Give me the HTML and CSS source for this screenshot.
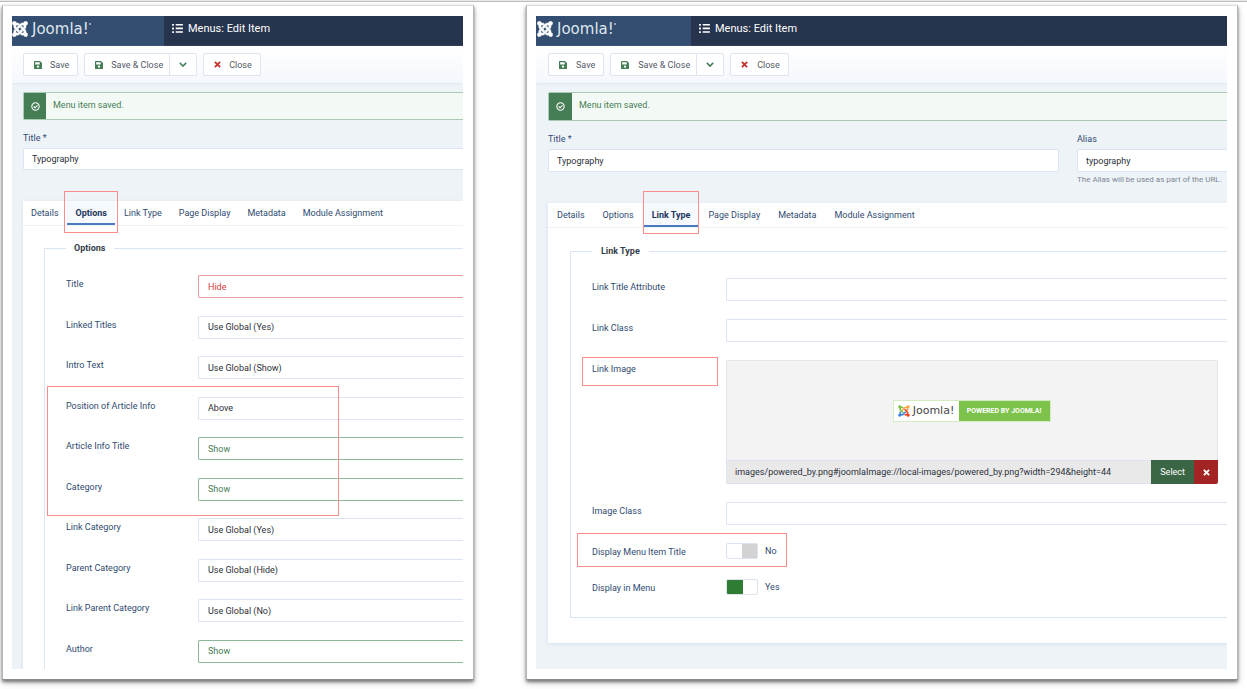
FILE: index.html
```html
<!DOCTYPE html>
<html lang="en">
<head>
<meta charset="utf-8">
<title>Menus: Edit Item</title>
<link rel="stylesheet" href="styles.css">
</head>
<body>
<svg width="0" height="0" class="sprite" aria-hidden="true">
  <symbol id="joomla" viewBox="-8 24 464 464">
    <path class="k1" d="M.6 92.1C.6 58.8 27.4 32 60.4 32c30 0 54.5 21.9 59.2 50.2 32.6-7.6 67.1.6 96.5 30l-44.3 44.3c-20.5-20.5-42.6-16.3-55.4-3.5-14.3 14.3-14.3 37.9 0 52.2l99.5 99.5-44 44.3c-87.7-87.2-49.7-49.7-99.8-99.7-26.8-26.5-35-64.8-24.8-98.9C20.4 144.6.6 120.7.6 92.1z"/>
    <path class="k2" d="M130.1 208.5l44.3 44.3c10-10 89.7-89.7 99.7-99.8 14.3-14.3 37.6-14.3 51.9 0 12.8 12.8 17 35-3.5 55.4l44 44.3c31.2-31.2 38.5-67.6 28.9-101.2 29.2-4.1 51.9-29.2 51.9-59.5 0-33.2-26.8-60.1-59.8-60.1-30.3 0-55.4 22.5-59.5 51.6-33.8-9.9-71.7-1.5-98.3 25.1-18.3 19.1-71.1 71.5-99.6 99.9z"/>
    <path class="k3" d="M396.4 360.7c8.2-32.7-.9-68.5-26.3-93.9-11.8-12.2 5 4.7-99.5-99.7l-44.3 44.3 99.7 99.7c14.3 14.3 14.3 37.6 0 51.9-12.8 12.8-35 17-55.4-3.5l-44 44.3c27.6 30.2 68 38.8 102.7 28 5.5 27.4 29.7 48.1 58.9 48.1 33 0 59.8-26.8 59.8-60.1 0-30.2-22.5-55-51.6-59.1z"/>
    <path class="k4" d="M312.1 307.6l-44-44.3c-87 86.4-50.4 50.4-99.7 99.8-14.3 14.3-37.6 14.3-51.9 0-13.1-13.4-16.9-35.3 3.2-55.4l-44-44.3c-30.2 30.2-38 65.2-29.5 98.3-26.7 6-46.2 29.9-46.2 58.2C0 453.2 26.8 480 59.8 480c28.6 0 52.5-19.8 58.6-46.7 32.7 8.2 68.5-.6 94.2-26 32.1-32 12.2-12.4 99.5-99.7z"/>
  </symbol>
  <symbol id="list" viewBox="0 0 12 10"><path d="M0 0h2v2H0zM0 4h2v2H0zM0 8h2v2H0zM4 0h8v1.7H4zM4 4h8v1.7H4zM4 8h8v1.7H4z"/></symbol>
  <symbol id="save" viewBox="0 0 448 448"><path fill-rule="evenodd" d="M434 98 350 14A48 48 0 0 0 316 0H48A48 48 0 0 0 0 48v352a48 48 0 0 0 48 48h352a48 48 0 0 0 48-48V132a48 48 0 0 0-14-34zM224 384a64 64 0 1 1 0-128 64 64 0 0 1 0 128zM320 180a12 12 0 0 1-12 12H76a12 12 0 0 1-12-12V76a12 12 0 0 1 12-12h232a12 12 0 0 1 12 12z"/></symbol>
  <symbol id="chevron" viewBox="0 0 10 6"><path d="M1 1l4 4 4-4" fill="none" stroke="currentColor" stroke-width="1.9"/></symbol>
  <symbol id="cross" viewBox="0 0 8 8"><path d="M1 1l6 6M7 1L1 7" fill="none" stroke="currentColor" stroke-width="2.1"/></symbol>
  <symbol id="check" viewBox="0 0 10 10"><path d="M5 .9a4.1 4.1 0 1 0 0 8.200a4.100 4.100 0 0 0 0-8.200zM3 5l1.500 1.500L7.200 3.700" fill="none" stroke="currentColor" stroke-width="1.200"/></symbol>
</svg>

<main class="shots">
  <section class="frame">
    <div class="panel">
      <header class="topbar">
        <a class="brand" href="#"><svg class="knot"><use href="#joomla"/></svg><span class="wordmark">Joomla!</span></a>
        <h1 class="page-title"><svg class="i-list"><use href="#list"/></svg>Menus: Edit Item</h1>
      </header>
      <div class="toolbar">
        <button class="btn"><svg class="i-save"><use href="#save"/></svg>Save</button>
        <div class="btn-group">
          <button class="btn"><svg class="i-save"><use href="#save"/></svg>Save &amp; Close</button>
          <button class="btn btn-drop" aria-label="More save options"><svg class="i-chevron"><use href="#chevron"/></svg></button>
        </div>
        <button class="btn"><svg class="i-cross"><use href="#cross"/></svg>Close</button>
      </div>
      <div class="content">
        <div class="alert"><span class="alert-icon"><svg class="i-check"><use href="#check"/></svg></span><span class="alert-text">Menu item saved.</span></div>
        <div class="title-area">
          <div class="stack"><label for="title-a">Title *</label><input class="control" id="title-a" type="text" value="Typography"></div>
        </div>
        <div class="card">
          <nav class="tabs">
            <a class="tab" href="#">Details</a>
            <a class="tab active" href="#">Options<span class="mark mark-tab"></span></a>
            <a class="tab" href="#">Link Type</a>
            <a class="tab" href="#">Page Display</a>
            <a class="tab" href="#">Metadata</a>
            <a class="tab" href="#">Module Assignment</a>
          </nav>
          <fieldset class="group">
            <legend>Options</legend>
            <div class="rows rows-fill">
              <div class="row"><label for="o1">Title</label><select class="control danger" id="o1"><option>Hide</option></select></div>
              <div class="row"><label for="o2">Linked Titles</label><select class="control" id="o2"><option>Use Global (Yes)</option></select></div>
              <div class="row"><label for="o3">Intro Text</label><select class="control" id="o3"><option>Use Global (Show)</option></select></div>
              <div class="row"><label for="o4">Position of Article Info</label><select class="control" id="o4"><option>Above</option></select></div>
              <div class="row"><label for="o5">Article Info Title</label><select class="control success" id="o5"><option>Show</option></select></div>
              <div class="row"><label for="o6">Category</label><select class="control success" id="o6"><option>Show</option></select></div>
              <div class="row"><label for="o7">Link Category</label><select class="control" id="o7"><option>Use Global (Yes)</option></select></div>
              <div class="row"><label for="o8">Parent Category</label><select class="control" id="o8"><option>Use Global (Hide)</option></select></div>
              <div class="row"><label for="o9">Link Parent Category</label><select class="control" id="o9"><option>Use Global (No)</option></select></div>
              <div class="row"><label for="o10">Author</label><select class="control success" id="o10"><option>Show</option></select></div>
              <span class="mark mark-rows"></span>
            </div>
          </fieldset>
        </div>
      </div>
    </div>
  </section>

  <section class="frame">
    <div class="panel wide">
      <header class="topbar">
        <a class="brand" href="#"><svg class="knot"><use href="#joomla"/></svg><span class="wordmark">Joomla!</span></a>
        <h1 class="page-title"><svg class="i-list"><use href="#list"/></svg>Menus: Edit Item</h1>
      </header>
      <div class="toolbar">
        <button class="btn"><svg class="i-save"><use href="#save"/></svg>Save</button>
        <div class="btn-group">
          <button class="btn"><svg class="i-save"><use href="#save"/></svg>Save &amp; Close</button>
          <button class="btn btn-drop" aria-label="More save options"><svg class="i-chevron"><use href="#chevron"/></svg></button>
        </div>
        <button class="btn"><svg class="i-cross"><use href="#cross"/></svg>Close</button>
      </div>
      <div class="content">
        <div class="alert"><span class="alert-icon"><svg class="i-check"><use href="#check"/></svg></span><span class="alert-text">Menu item saved.</span></div>
        <div class="title-area">
          <div class="stack"><label for="title-b">Title *</label><input class="control closed" id="title-b" type="text" value="Typography"></div>
          <div class="stack"><label for="alias">Alias</label><input class="control" id="alias" type="text" value="typography"><small class="hint">The Alias will be used as part of the URL.</small></div>
        </div>
        <div class="card">
          <nav class="tabs">
            <a class="tab" href="#">Details</a>
            <a class="tab" href="#">Options</a>
            <a class="tab active" href="#">Link Type<span class="mark mark-tab"></span></a>
            <a class="tab" href="#">Page Display</a>
            <a class="tab" href="#">Metadata</a>
            <a class="tab" href="#">Module Assignment</a>
          </nav>
          <fieldset class="group">
            <legend>Link Type</legend>
            <div class="rows">
              <div class="row"><label for="l1">Link Title Attribute</label><input class="control" id="l1" type="text"></div>
              <div class="row"><label for="l2">Link Class</label><input class="control" id="l2" type="text"></div>
              <div class="row"><label for="l3">Link Image</label>
                <div class="media">
                  <div class="preview">
                    <div class="badge"><span class="badge-logo"><svg class="knot color"><use href="#joomla"/></svg><span class="wordmark">Joomla!</span></span><span class="badge-text">POWERED BY JOOMLA!</span></div>
                  </div>
                  <div class="media-bar">
                    <input class="control path" id="l3" type="text" readonly value="images/powered_by.png#joomlaImage://local-images/powered_by.png?width=294&amp;height=44">
                    <button class="select-btn">Select</button>
                    <button class="clear-btn" aria-label="Clear"><svg class="i-cross"><use href="#cross"/></svg></button>
                  </div>
                </div>
                <span class="mark mark-label"></span>
              </div>
              <div class="row"><label for="l4">Image Class</label><input class="control" id="l4" type="text"></div>
              <div class="row"><label for="l5">Display Menu Item Title</label><span class="switch"><input class="toggle" id="l5" type="checkbox"><span>No</span></span><span class="mark mark-switch"></span></div>
              <div class="row"><label for="l6">Display in Menu</label><span class="switch"><input class="toggle" id="l6" type="checkbox" checked><span>Yes</span></span></div>
            </div>
          </fieldset>
        </div>
      </div>
    </div>
  </section>
</main>
</body>
</html>
```
FILE: styles.css
```css
* { box-sizing: border-box; }
html { background: #fff; }
body {
  margin: 0;
  font: 9px/14px Roboto, "Liberation Sans", sans-serif;
  color: #2f4a70;
  border-top: 1px solid #e8e8e8;
  box-shadow: inset 0 1px #bdbdbd;
  min-height: 100vh;
  display: flex;
}
.sprite { position: absolute; }
button, input, select { font: inherit; margin: 0; }
svg { display: block; fill: currentColor; flex: none; }
a { color: inherit; text-decoration: none; }

.shots {
  flex: 1;
  display: grid;
  grid-template-columns: minmax(0, 472fr) minmax(0, 712fr);
  gap: 52px;
  padding: 4px 9px 9px 2px;
}
.frame {
  display: flex;
  background: #fff;
  border: 1px solid #b4b4b4;
  border-top-color: #dcdcdc;
  border-bottom-color: #8c8c8c;
  padding: 10px 10px 10px 9px;
  box-shadow: 0 2px 3px rgba(0, 0, 0, .45), 0 3px 7px rgba(0, 0, 0, .2);
}
.panel {
  --control: 22px;
  --alert: 28px;
  --brand: 152px;
  --inset: 11px;
  --label: 132px;
  flex: 1;
  min-width: 0;
  display: flex;
  flex-direction: column;
  background: #eef3f8;
  overflow: hidden;
}
.panel.wide {
  --control: 23px;
  --alert: 29px;
  --brand: 155px;
  --inset: 12px;
  --label: 134px;
}

.topbar { display: flex; height: 30px; background: #26354d; color: #fff; }
.brand {
  width: var(--brand);
  background: #334e70;
  display: flex;
  align-items: center;
  gap: 4px;
  padding-bottom: 5px;
}
.wide .brand { padding-left: 1px; }
.knot { width: 16px; height: 16px; stroke: currentColor; stroke-width: 14px; }
.wordmark { font: 400 15px/20px "DejaVu Sans", sans-serif; }
.brand .wordmark { color: #dfe6ee; display: flex; }
.brand .wordmark::after {
  content: "";
  width: 2px;
  height: 2px;
  margin-top: 4px;
  border-radius: 1px;
  background: #b9c5d3;
}
.page-title {
  margin: 0;
  display: flex;
  align-items: center;
  gap: 5px;
  padding: 0 0 5px 8px;
  font-size: 11px;
  font-weight: 400;
}
.i-list { width: 11px; height: 9px; }

.toolbar {
  display: flex;
  gap: 6px;
  padding: 7px var(--inset);
  height: 37px;
  background: linear-gradient(#fff, #f4f7fc);
  box-shadow: 0 1px 2px #dce5f0;
}
.btn {
  display: flex;
  align-items: center;
  gap: 8px;
  height: 23px;
  padding: 0 8px 0 10px;
  background: #fff;
  border: 1px solid #dfe5ee;
  border-radius: 2px;
  color: #525a66;
  white-space: nowrap;
}
.wide .btn { gap: 9px; }
.btn-group { display: flex; }
.btn-group .btn:first-child { border-radius: 2px 0 0 2px; padding-right: 6px; }
.btn-group .btn-drop { border-left: 0; border-radius: 0 2px 2px 0; padding: 0 9px; }
.i-save { width: 8px; height: 8px; color: #457d54; }
.i-chevron { width: 8px; height: 5px; color: #457d54; }
.i-cross { width: 7px; height: 7px; color: #c9302c; }

.content {
  flex: 1;
  display: flex;
  flex-direction: column;
  padding: 9px 0 0 var(--inset);
}
.wide .content { padding-bottom: 26px; }
.alert {
  display: flex;
  height: var(--alert);
  background: #f3faf5;
  border: 1px solid #a9cbb4;
  border-right: 0;
  border-radius: 2px 0 0 2px;
  color: #457d54;
}
.alert-icon {
  width: 22px;
  display: grid;
  place-items: center;
  background: #457d54;
  color: #fff;
}
.wide .alert-icon { width: 23px; }
.i-check { width: 9px; height: 9px; }
.alert-text { padding: 5px 7px; }

.title-area { display: flex; margin: 11px 0 31px; }
.wide .title-area { gap: 18px; margin-bottom: 19px; }
.stack { flex: 1; display: flex; flex-direction: column; gap: 3px; }
.stack + .stack { flex: 0 0 150px; }
.hint { font-size: 8px; line-height: 9px; color: #7d8693; white-space: nowrap; }
.control {
  width: 100%;
  min-width: 0;
  height: var(--control);
  padding: 0 8px;
  background: #fff;
  border: 1px solid #dbe4f0;
  border-right: 0;
  border-radius: 2px 0 0 2px;
  color: #2b3038;
  appearance: none;
}
.control.closed { border-right: 1px solid #dbe4f0; border-radius: 2px; }
.control.danger { color: #d33a3a; border-color: #e79a9a; }
.control.success { color: #457d54; border-color: #8db899; }

.card {
  flex: 1;
  display: flex;
  flex-direction: column;
  background: #fff;
  box-shadow: 0 1px 4px #d3deeb;
}
.wide .card { padding-bottom: 25px; flex: none; }
.tabs { display: flex; height: 25px; border-bottom: 1px solid #eff2f6; }
.tab {
  position: relative;
  height: 24px;
  padding: 5px 8px 0 9px;
  white-space: nowrap;
}
.tab:first-child { padding-left: 8px; }
.wide .tab { padding: 5px 9px 0; }
.tab.active { font-weight: 700; color: #1d365c; background: #f6f9fd; border-bottom: 2px solid #4a7ac0; }

.mark {
  position: absolute;
  border: 1px solid #f98d8d;
  pointer-events: none;
}
.mark-tab { inset: -10px -3px; }
.wide .mark-tab { inset: -12px 0 -9px; }
.mark-rows { grid-row: 4 / 7; inset: -11px auto -15px -19px; width: 292px; }
.mark-label { top: -3px; left: -10px; width: 136px; height: 29px; }
.mark-switch { top: -10px; left: -15px; width: 210px; height: 34px; }

.group {
  flex: 1;
  display: flex;
  flex-direction: column;
  min-width: 0;
  margin: 15px 0 0 21px;
  border: 1px solid #dbe5f2;
  border-width: 1px 0 0 1px;
  padding: 20px 0 6px 21px;
}
.wide .group { margin: 16px 0 0 22px; padding-bottom: 20px; border-bottom-width: 1px; }
legend { padding: 0 9px 0 8px; font-weight: 700; color: #363e4a; }
.wide legend { padding-left: 9px; }
.rows { flex: 1; display: grid; gap: 18px; position: relative; }
.rows-fill { gap: 0; grid-template-rows: repeat(10, 23px); align-content: space-between; }
.rows .control { height: 23px; padding: 0 9px; }
.row {
  position: relative;
  display: grid;
  grid-template-columns: var(--label) minmax(0, 1fr);
  align-items: start;
  min-height: 18px;
}
.row label { padding-top: 2px; }
.switch { display: flex; align-items: center; gap: 7px; }
.toggle {
  appearance: none;
  width: 32px;
  height: 16px;
  border: 1px solid #dbe3ec;
  border-radius: 2px;
  background: linear-gradient(90deg, #fff 50%, #d3d3d3 50%);
}
.toggle:checked { background: linear-gradient(90deg, #2f7d32 52%, #fff 52%); }

.media { margin-right: 9px; }
.preview {
  height: 100px;
  display: grid;
  place-items: center;
  background: #f3f3f3;
  border: 1px solid #e2e5e9;
  border-bottom: 0;
  border-radius: 2px 2px 0 0;
}
.badge { display: flex; height: 22px; border: 1px solid #d5ecc2; }
.badge-logo {
  display: flex;
  align-items: center;
  gap: 3px;
  width: 65px;
  padding-left: 4px;
  background: #fff;
  color: #444;
}
.badge .knot { width: 12px; height: 12px; stroke: none; }
.badge .wordmark { font-size: 11px; line-height: 14px; }
.k1 { fill: var(--green, currentColor); }
.k2 { fill: var(--orange, currentColor); }
.k3 { fill: var(--red, currentColor); }
.k4 { fill: var(--blue, currentColor); }
.color { --green: #7ac143; --orange: #f9a541; --red: #f44321; --blue: #3f83d8; }
.badge-text {
  padding: 3px 9px 3px 8px;
  background: #7dc24b;
  color: #fff;
  font-size: 7px;
  font-weight: 700;
}
.media-bar { display: flex; height: 24px; }
.media-bar .path { height: 24px; flex: 1; padding: 0 8px; background: #e9e9ea; border-radius: 0 0 0 2px; }
.select-btn, .clear-btn { border: 0; padding: 0 9px; color: #fff; background: #3a6645; }
.clear-btn { padding: 0 8px 0 9px; background: #a32424; border-radius: 0 0 2px 0; }
.clear-btn .i-cross { color: #fff; }
```
